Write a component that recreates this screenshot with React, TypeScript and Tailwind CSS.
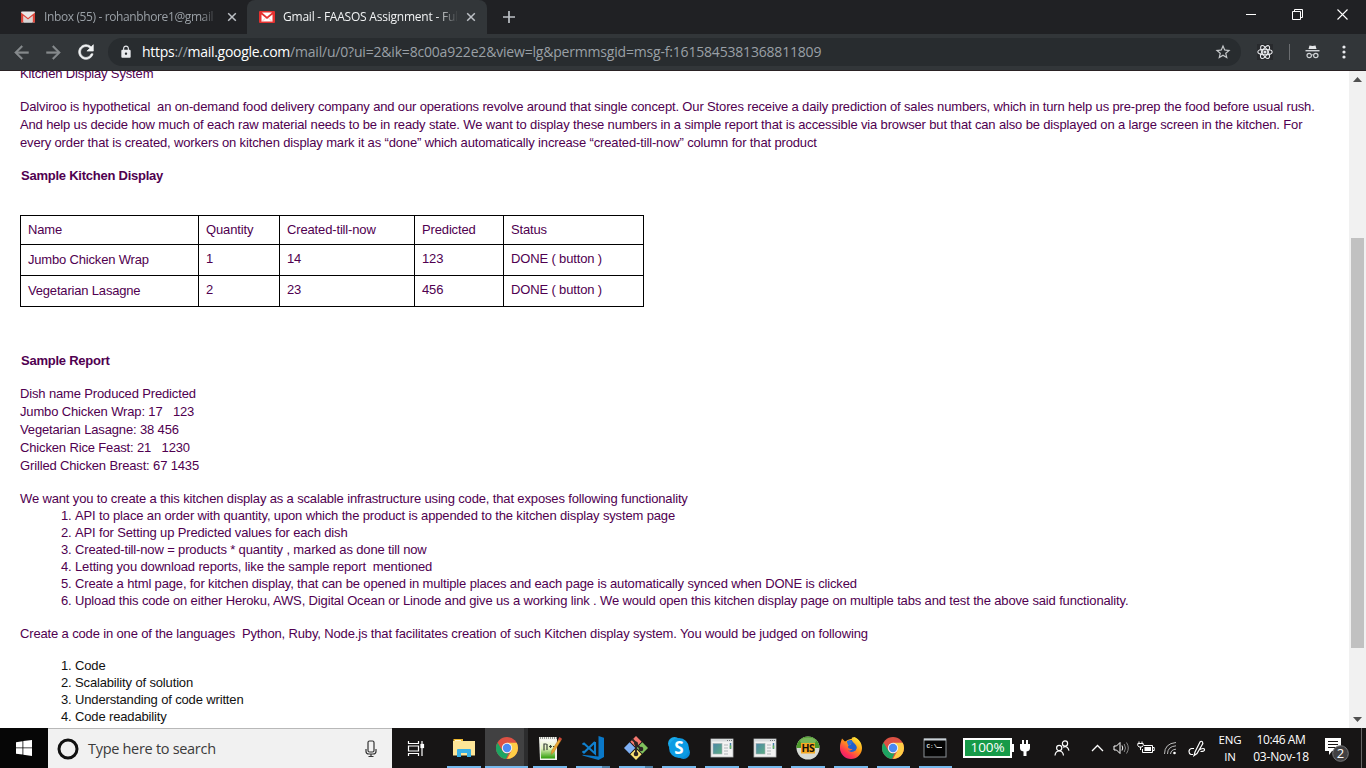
import React from "react";
import { MdArrowBack, MdArrowForward, MdRefresh, MdLock, MdStarBorder } from "react-icons/md";

const ui = "font-['Open_Sans','Noto_Sans',sans-serif] whitespace-pre";

function GmailIcon({ active }: { active?: boolean }) {
  return (
    <svg width="16" height="12" viewBox="0 0 16 12">
      {active ? (
        <>
          <rect width="16" height="12" rx="1" fill="#e5302f" />
          <path d="M2.500 10.500V3.500L8 8l5.500-4.500v7z" fill="#fff" />
          <path d="M3 1.500h10L8 5.800z" fill="#fff" />
          <path d="M3 10.500l3.500-3.500M13 10.500L9.500 7" stroke="#f3a9a6" strokeWidth=".7" />
        </>
      ) : (
        <>
          <rect x="1" y=".5" width="14" height="11" rx="1" fill="#e9e7e7" />
          <path d="M4 11.500V5l4 3.500L12 5v6.500z" fill="#d8d5d5" />
          <path d="M1 11.500V1.500L8 7l7-5.500v10h-2.300V4.800L8 8.500 3.300 4.800v6.700z" fill="#d9453a" />
        </>
      )}
    </svg>
  );
}

function CloseX() {
  return (
    <svg width="10" height="10" viewBox="0 0 10 10" stroke="#bdc1c6" strokeWidth="1.500">
      <path d="M1.200 1.200l7.600 7.600M8.800 1.200L1.200 8.800" />
    </svg>
  );
}

function ChromeIcon() {
  return (
    <svg width="24" height="24" viewBox="0 0 24 24">
      <circle cx="12" cy="12" r="11" fill="#dd5144" />
      <path d="M12 6.800h9.700A11 11 0 0 1 12 23l4.600-8.400z" fill="#ffcd46" />
      <path d="M2.500 6.400L7.400 14.800a5.200 5.200 0 0 0 6.500 2L11 23A11 11 0 0 1 2.500 6.400z" fill="#1da462" />
      <circle cx="12" cy="12" r="5.200" fill="#f3f3f3" />
      <circle cx="12" cy="12" r="4.200" fill="#4a8af4" />
    </svg>
  );
}

function ExplorerIcon() {
  return (
    <svg width="24" height="24" viewBox="0 0 24 24">
      <path d="M1.500 3h9.500v4H1.500z" fill="#f0b92f" />
      <path d="M1 5h22v14.500H1z" fill="#fde597" />
      <path d="M3 4h6v1H3z" fill="#fff6d0" />
      <path d="M5 21v-7a1 1 0 0 1 1-1h12a1 1 0 0 1 1 1v7h-4v-4H9v4z" fill="#38b0e6" />
    </svg>
  );
}

function NotepadIcon() {
  return (
    <svg width="24" height="24" viewBox="0 0 24 24">
      <defs>
        <linearGradient id="npp" x1="0" y1="0" x2="0" y2="1">
          <stop offset="0" stopColor="#fafaf6" />
          <stop offset=".45" stopColor="#e3f3bd" />
          <stop offset="1" stopColor="#2f9d08" />
        </linearGradient>
      </defs>
      <path d="M1 1h18v23H2z" fill="#f1f2ec" />
      <path d="M2.500 4H17v18.500H3z" fill="url(#npp)" />
      <path d="M2 2h17" stroke="#7b7f7b" strokeDasharray="1 1" strokeWidth="1.500" />
      <path d="M6 7.500v7M6 8h2.500M9 8v6M11 10.500h3M12.500 9v3M15 10.500h1.500" stroke="#39423a" strokeWidth="1.200" />
      <path d="M21.500 2l2 1.500L16 16l-3 2.500.8-4z" fill="#e8a733" stroke="#a36a18" strokeWidth=".4" />
      <path d="M21.500 1l2.300 1.500L22.500 5l-2.400-1.500z" fill="#cf453a" />
    </svg>
  );
}

function CodeIcon() {
  return (
    <svg width="26" height="26" viewBox="0 0 26 26">
      <path d="M18.500 1L24 2.800V22l-5.500 3L2.500 20.500v-.7l16 1.700z" fill="#0a78c8" />
      <path d="M15 7v11.500L4 8.500 2.500 9.500M15 7L4 17.500 2.500 16.200" fill="none" stroke="#1080ce" strokeWidth="2.100" />
    </svg>
  );
}

function GitIcon() {
  return (
    <svg width="26" height="26" viewBox="0 0 26 26">
      <g transform="rotate(45 13 13)">
        <rect x="4.500" y="4.500" width="8" height="8" fill="#f4786f" />
        <rect x="13.500" y="4.500" width="8" height="8" fill="#80c15d" />
        <rect x="4.500" y="13.500" width="8" height="8" fill="#7fb0f5" />
        <rect x="13.500" y="13.500" width="8" height="8" fill="#fae173" />
      </g>
      <path d="M9 4l4 4v12M13 9l5 5" stroke="#2c2424" strokeWidth="1.900" fill="none" />
      <circle cx="13" cy="8.500" r="2" fill="#2c2424" />
      <circle cx="18" cy="14" r="2.300" fill="#2c2424" />
      <circle cx="13" cy="19" r="2.300" fill="#2c2424" />
    </svg>
  );
}

function SkypeIcon() {
  return (
    <svg width="24" height="24" viewBox="0 0 24 24">
      <circle cx="7.500" cy="7.500" r="6.500" fill="#19abec" />
      <circle cx="16.500" cy="16.500" r="6.500" fill="#0a8edb" />
      <circle cx="12" cy="12" r="10" fill="#0c9be3" />
      <text x="12" y="18" textAnchor="middle" fontFamily="Open Sans" fontWeight="700" fontSize="17" fill="#fff">S</text>
    </svg>
  );
}

function WindowIcon() {
  return (
    <svg width="24" height="24" viewBox="0 0 24 24">
      <defs>
        <linearGradient id="scr" x1="0" y1="0" x2="1" y2="1">
          <stop offset="0" stopColor="#4d86a8" />
          <stop offset="1" stopColor="#5dae83" />
        </linearGradient>
      </defs>
      <rect x="1" y="3" width="22" height="18" fill="#f2f2f2" stroke="#b6b8ba" strokeWidth=".8" />
      <path d="M1 4.500h22" stroke="#d7dadc" strokeWidth="2" />
      <path d="M17 4.500h1M19 4.500h1M21 4.500h1" stroke="#74797d" />
      <rect x="3" y="7.500" width="9" height="10.500" fill="url(#scr)" stroke="#a5adb1" strokeWidth=".6" />
      <path d="M14 9h4M14 12h4M14 15h4M14 18h4" stroke="#c6c9cb" strokeWidth="1.400" />
      <path d="M20.500 7v6" stroke="#467ba9" strokeWidth="1.500" />
      <path d="M20.500 9.500v3" stroke="#66b855" strokeWidth="1.500" />
    </svg>
  );
}

function HsIcon() {
  return (
    <svg width="24" height="24" viewBox="0 0 24 24">
      <circle cx="12" cy="12" r="11.500" fill="#d7dad4" />
      <path d="M.5 12a11.500 11.500 0 0 1 23 0z" fill="#4c9a2b" />
      <ellipse cx="12" cy="5" rx="8" ry="3.500" fill="#78b65a" />
      <rect x="5" y="7" width="14" height="10.500" fill="#f6a821" />
      <text x="12" y="16" textAnchor="middle" fontFamily="Open Sans" fontWeight="700" fontSize="10.500" letterSpacing="-.4" fill="#17130b">HS</text>
    </svg>
  );
}

function FirefoxIcon() {
  return (
    <svg width="24" height="24" viewBox="0 0 24 24">
      <defs>
        <linearGradient id="ff" x1=".85" y1="0" x2=".15" y2="1">
          <stop offset="0" stopColor="#fff03d" />
          <stop offset=".4" stopColor="#ff9a16" />
          <stop offset=".75" stopColor="#ff3750" />
          <stop offset="1" stopColor="#e3127b" />
        </linearGradient>
      </defs>
      <path d="M2 5.500L3 2.500l3 3C9 4 9.500 3 13 3l2-2c5 2 8 6 8 11a11 11 0 0 1-22 0c0-3 .3-4.500 1-6.500z" fill="url(#ff)" />
      <circle cx="12.500" cy="10" r="6" fill="#2160cd" />
      <path d="M13 1.500c-1 2 0 4 2.500 6s3 5 1.500 7-5 3-8 0c2 .5 4-.5 4.500-1.500-3 0-4-.5-4.500-2 0-1.500 1-2 3-2.300C11 7 9.500 6 6.500 6L3 6c-2 4-2 8 0 11l9 5 8-4 2-7c0-4-2-7-6-9.500z" fill="url(#ff)" />
      <path d="M8 5c2-.8 4-.5 5.500 1l-1.500 2.500c-1.500 0-2 .5-1.500 1.500-1-.5-2.500-2-2.500-5z" fill="#2b73dc" />
    </svg>
  );
}

function CmdIcon() {
  return (
    <svg width="24" height="24" viewBox="0 0 24 24">
      <rect x="1" y="3" width="22" height="18" fill="#050505" stroke="#8b9196" />
      <path d="M1 3.500h22" stroke="#c9d0d6" strokeWidth="2" />
      <text x="3.500" y="12" fontFamily="Liberation Mono" fontWeight="700" fontSize="6" fill="#e0e0e0">C:\</text>
      <path d="M14 11.500h5" stroke="#e0e0e0" />
    </svg>
  );
}

const apps: { icon: React.ReactNode; slot: string; line: string }[] = [
  { icon: <ExplorerIcon />, slot: "w-[43px]", line: "w-[34px]" },
  { icon: <ChromeIcon />, slot: "w-[43px] bg-linear-to-r from-[#414142] from-90% to-[#2c2c2d] to-90%", line: "w-[43px]" },
  { icon: <NotepadIcon />, slot: "w-[43px]", line: "w-[34px]" },
  { icon: <CodeIcon />, slot: "w-[43px]", line: "w-[34px] border-r-8 border-[#4f80a6]" },
  { icon: <GitIcon />, slot: "w-[43px]", line: "w-[34px] border-r-8 border-[#4f80a6]" },
  { icon: <SkypeIcon />, slot: "w-[43px]", line: "w-[34px]" },
  { icon: <WindowIcon />, slot: "w-[43px]", line: "w-[34px]" },
  { icon: <WindowIcon />, slot: "w-[43px]", line: "w-[34px]" },
  { icon: <HsIcon />, slot: "w-[43px]", line: "w-[34px]" },
  { icon: <FirefoxIcon />, slot: "w-[43px]", line: "w-[34px]" },
  { icon: <ChromeIcon />, slot: "w-[42px]", line: "w-[33px]" },
  { icon: <CmdIcon />, slot: "w-[42px]", line: "w-[33px]" },
];

const rows = [
  ["Jumbo Chicken Wrap", "1", "14", "123", "DONE ( button )"],
  ["Vegetarian Lasagne", "2", "23", "456", "DONE ( button )"],
];

const report = [
  "Dish name Produced Predicted",
  "Jumbo Chicken Wrap: 17   123",
  "Vegetarian Lasagne: 38 456",
  "Chicken Rice Feast: 21   1230",
  "Grilled Chicken Breast: 67 1435",
];

const features = [
  "API to place an order with quantity, upon which the product is appended to the kitchen display system page",
  "API for Setting up Predicted values for each dish",
  "Created-till-now = products * quantity , marked as done till now",
  "Letting you download reports, like the sample report  mentioned",
  "Create a html page, for kitchen display, that can be opened in multiple places and each page is automatically synced when DONE is clicked",
  "Upload this code on either Heroku, AWS, Digital Ocean or Linode and give us a working link . We would open this kitchen display page on multiple tabs and test the above said functionality.",
];

const criteria = ["Code", "Scalability of solution", "Understanding of code written", "Code readability"];

function NumberedList({ items }: { items: string[] }) {
  return (
    <ol className="-mt-px mb-px pl-[41px] leading-[17px]">
      {items.map((t, i) => (
        <li key={t} className="flex">
          <span className="w-[14px]">{i + 1}.</span>
          <span>{t}</span>
        </li>
      ))}
    </ol>
  );
}

function Browser() {
  return (
    <header className="h-[71px] shrink-0 border-b border-[#2a2224] bg-[#323639]">
      <div className="flex h-[34px] bg-[#202124]">
        <div className={`${ui} flex w-[247px] items-center pl-[20px] text-[12px] text-[#9aa0a6]`}>
          <GmailIcon />
          <div className="ml-[8px] w-[174px] tracking-[-0.38px] [mask-image:linear-gradient(to_right,#000_90%,transparent)]">Inbox (55) - rohanbhore1@gmail</div>
          <div className="ml-[9px]"><CloseX /></div>
        </div>
        <div className={`${ui} flex w-[240px] items-center rounded-t-[8px] bg-[#323639] pl-[12px] text-[12px] text-[#f1f3f4]`}>
          <GmailIcon active />
          <div className="ml-[8px] w-[175px] tracking-[-0.22px] [mask-image:linear-gradient(to_right,#000_88%,transparent)]">Gmail - FAASOS Assignment - Ful</div>
          <div className="ml-[8px]"><CloseX /></div>
        </div>
        <svg className="mt-[11px] ml-[16px]" width="12" height="12" viewBox="0 0 12 12" stroke="#bdc1c6" strokeWidth="1.700"><path d="M6 0v12M0 6h12" /></svg>
        <div className="ml-auto flex w-[120px] justify-between pt-[9px] pr-[18px] pl-0">
          <svg width="11" height="11" viewBox="0 0 11 11" stroke="#fff"><path d="M0 5.500h10" /></svg>
          <svg width="11" height="11" viewBox="0 0 11 11" stroke="#fff" fill="none"><path d="M.5 2.500h8v8h-8zM2.500 2.500v-2h8v8h-2" /></svg>
          <svg width="11" height="11" viewBox="0 0 11 11" stroke="#fff" strokeWidth="1.100"><path d="M.5.5l10 10M10.500.5l-10 10" /></svg>
        </div>
      </div>
      <div className="flex h-[36px] items-center">
        <MdArrowBack className="ml-[11px] [&>path:last-child]:stroke-[0.5px]" size={21} color="#868a8d" strokeWidth={0} />
        <MdArrowForward className="ml-[11px] [&>path:last-child]:stroke-[0.5px]" size={21} color="#868a8d" strokeWidth={0} />
        <MdRefresh className="ml-[11px] [&>path:last-child]:stroke-[0.7px]" size={22} color="#f1f3f4" strokeWidth={0} />
        <div className={`${ui} ml-[11px] flex h-[28px] w-[1133px] items-center rounded-full bg-[#282c2f] pl-[11px] text-[14px]`}>
          <MdLock size={14} color="#e8eaed" />
          <div className="-mt-px ml-[9px] tracking-[-0.19px] text-[#9aa0a6]">
            <span className="tracking-[-0.28px]"><span className="text-white">https</span>://<span className="text-white">mail.google.com</span></span>/mail/u/0?ui=2&amp;ik=8c00a922e2&amp;view=lg&amp;permmsgid=msg-f:1615845381368811809
          </div>
          <MdStarBorder className="mr-[9px] ml-auto" size={18} color="#c5c8ca" />
        </div>
        <svg className="ml-[16px]" width="16" height="16" viewBox="0 0 16 16" fill="none" stroke="#e8eaed" strokeWidth="1.100">
          <rect width="16" height="16" fill="#282a2d" stroke="none" />
          <ellipse cx="8" cy="8" rx="7.200" ry="2.800" />
          <ellipse cx="8" cy="8" rx="7.200" ry="2.800" transform="rotate(60 8 8)" />
          <ellipse cx="8" cy="8" rx="7.200" ry="2.800" transform="rotate(120 8 8)" />
          <circle cx="8" cy="8" r="1" fill="#e8eaed" />
        </svg>
        <div className="ml-[16px] h-[16px] w-px bg-[#6a6d70]" />
        <svg className="ml-[15px]" width="15" height="16" viewBox="0 0 15 16" fill="none" stroke="#d0d3d6">
          <path d="M3.500 5L4.500 1.500l3 .6 3-.6L11.500 5z" fill="#e3e5e7" stroke="none" />
          <path d="M.5 6.700h14" strokeWidth="1.400" />
          <circle cx="4.200" cy="11.500" r="2.200" strokeWidth="1.200" />
          <circle cx="10.800" cy="11.500" r="2.200" strokeWidth="1.200" />
          <path d="M6.300 11.200q1.200-.8 2.400 0" />
        </svg>
        <svg className="ml-[22px]" width="4" height="14" viewBox="0 0 4 14" fill="#e8eaed"><circle cx="2" cy="2" r="1.600" /><circle cx="2" cy="7" r="1.600" /><circle cx="2" cy="12" r="1.600" /></svg>
      </div>
    </header>
  );
}

function Message() {
  return (
    <main className="flex min-h-0 flex-1 overflow-hidden bg-white font-['Liberation_Sans',Arial,sans-serif] text-[13px] leading-[18px] tracking-[-0.146px] whitespace-pre text-[#500050]">
      <div className="flex min-w-0 flex-1 flex-col overflow-hidden pl-[20px]">
        <div className="-mt-[6px]">Kitchen Display System</div>
        <div className="mt-[15px]">
          <div>Dalviroo is hypothetical  an on-demand food delivery company and our operations revolve around that single concept. Our Stores receive a daily prediction of sales numbers, which in turn help us pre-prep the food before usual rush.</div>
          <div>And help us decide how much of each raw material needs to be in ready state. We want to display these numbers in a simple report that is accessible via browser but that can also be displayed on a large screen in the kitchen. For</div>
          <div>every order that is created, workers on kitchen display mark it as “done” which automatically increase “created-till-now” column for that product</div>
        </div>
        <h2 className="mt-[15px] pl-px font-bold tracking-[-0.24px]">Sample Kitchen Display</h2>
        <table className="mt-[30px] w-[624px] table-fixed border-collapse [&_td]:border [&_td]:border-black [&_td]:px-[7px] [&_td]:py-0">
          <colgroup>
            <col className="w-[178px]" /><col className="w-[81px]" /><col className="w-[135px]" /><col className="w-[89px]" /><col className="w-[140px]" />
          </colgroup>
          <tbody>
            <tr className="h-[29px]">
              {["Name", "Quantity", "Created-till-now", "Predicted", "Status"].map((h) => <td key={h}>{h}</td>)}
            </tr>
            {rows.map((r) => (
              <tr key={r[0]} className="h-[31px]">
                {r.map((c, i) => <td key={i} className={i === 0 ? "tracking-[-0.18px]" : "pb-[2px]!"}>{c}</td>)}
              </tr>
            ))}
          </tbody>
        </table>
        <h2 className="mt-[45px] pl-px font-bold tracking-[-0.24px]">Sample Report</h2>
        <div className="mt-[15px]">{report.map((t) => <div key={t}>{t}</div>)}</div>
        <div className="mt-[15px]">We want you to create a this kitchen display as a scalable infrastructure using code, that exposes following functionality</div>
        <NumberedList items={features} />
        <div className="mt-[15px]">Create a code in one of the languages  Python, Ruby, Node.js that facilitates creation of such Kitchen display system. You would be judged on following</div>
        <div className="mt-[15px] text-[#111]"><NumberedList items={criteria} /></div>
      </div>
      <div className="flex w-[17px] shrink-0 flex-col items-center bg-[#f1f1f1]">
        <svg className="mt-[6px]" width="9" height="5" viewBox="0 0 9 5"><path d="M4.500 0L9 5H0z" fill="#505050" /></svg>
        <div className="mt-[156px] h-[410px] w-[13px] bg-[#c1c1c1]" />
        <svg className="mt-auto mb-[6px]" width="9" height="5" viewBox="0 0 9 5"><path d="M4.500 5L9 0H0z" fill="#505050" /></svg>
      </div>
    </main>
  );
}

function Taskbar() {
  return (
    <footer className={`${ui} flex h-[40px] shrink-0 bg-[#171515] text-white`}>
      <div className="flex w-[48px] items-center justify-center bg-[#060606]">
        <svg width="16" height="16" viewBox="0 0 16 16" fill="#fff"><path d="M0 2.200L6.500 1.200v6.300H0zM7.300 1.100L16 0v7.500H7.300zM0 8.300h6.500v6.300L0 13.700zM7.300 8.300H16V16l-8.700-1.200z" /></svg>
      </div>
      <div className="flex w-[344px] items-center border-t border-[#b8b8b8] bg-[#f1f1f1] pl-[9px]">
        <svg width="22" height="22" viewBox="0 0 22 22"><circle cx="11" cy="11" r="9" fill="none" stroke="#111" strokeWidth="3" /></svg>
        <div className="ml-[9px] text-[14.500px] tracking-[-0.3px] text-[#3b3b3b]">Type here to search</div>
        <svg className="mr-[15px] ml-auto" width="12" height="18" viewBox="0 0 12 18" fill="none" stroke="#333" strokeWidth="1.200"><rect x="3" y="1" width="6" height="11" rx="1.500" /><path d="M1 9v2.500q0 2.500 3 2.500h4q3 0 3-2.500V9M6 14v2.500M3.500 16.500h5" /></svg>
      </div>
      <div className="flex w-[50px] items-center justify-center pr-[2px]">
        <svg width="18" height="17" viewBox="0 0 18 17" fill="none" stroke="#fff" strokeWidth="1.200"><path d="M1.500 1v2.500h10V1M1.500 16v-2.500h10V16M1.500 6h10v5h-10zM15 1v15" /><rect x="14" y="4.500" width="2.500" height="3" fill="#fff" /></svg>
      </div>
      <div className="flex">
        {apps.map((a, i) => (
          <div key={i} className={`flex flex-col items-center ${a.slot}`}>
            <div className="-mb-[2px] flex h-[40px] items-center">{a.icon}</div>
            <div className={`h-[2px] bg-[#76b9ed] ${a.line}`} />
          </div>
        ))}
      </div>
      <div className="ml-[7px] flex items-center">
        <div className="flex h-[20px] w-[49px] items-center justify-center border-2 border-white bg-[#169a48] pb-px text-[13.500px] leading-none tracking-[-0.1px]">100%</div>
        <div className="h-[8px] w-[2px] bg-white" />
        <svg className="ml-[6px]" width="10" height="16" viewBox="0 0 10 16" fill="#fff"><path d="M2 0h2v4h2V0h2v4h2v4q0 3-3.500 3.500V16h-3v-4.500Q0 11 0 8V4h2z" /></svg>
      </div>
      <div className="ml-auto flex items-center">
        <svg width="16" height="17" viewBox="0 0 16 17" fill="none" stroke="#fff" strokeWidth="1.200"><circle cx="5.200" cy="8" r="2.600" /><path d="M1 15.500q.5-4.500 4.200-4.500t4.300 4.500" /><circle cx="11" cy="3.500" r="2.600" /><path d="M9 7.200q4.500-2 6 3.500" /></svg>
        <svg className="ml-[21px]" width="13" height="8" viewBox="0 0 13 8" fill="none" stroke="#fff" strokeWidth="1.300"><path d="M1 7l5.500-5.500L12 7" /></svg>
        <svg className="ml-[9px]" width="17" height="14" viewBox="0 0 17 14" fill="none" stroke="#fff"><path d="M1 5h2.500L7 1.500v11L3.500 9H1z" /><path d="M9 4.500q1.500 2.500 0 5" /><path d="M11.200 3q2.600 4 0 8M13.500 1.500q3.600 5.500 0 11" stroke="#888" /></svg>
        <svg className="ml-[7px]" width="18" height="14" viewBox="0 0 18 14" fill="none" stroke="#fff"><path d="M2 .5v2M5 .5v2M.8 2.500h5.400v2l-1.200 1.500H2L.8 4.500zM3.500 6v3" /><path d="M7 4.500h8.500v7h-10V8M16 6.500h1.200v3H16" /><path d="M7.500 6h6.500v4H7.500z" fill="#fff" stroke="none" /></svg>
        <svg className="ml-[8px]" width="14" height="14" viewBox="0 0 14 14" fill="none" stroke="#bbb"><path d="M1.500 13Q1.500 2.500 13 1.500M4.500 13Q4.500 5.500 13 4.800M7.500 13Q8 8.500 13 8.200" /><circle cx="11.500" cy="12" r="1.300" fill="#fff" stroke="none" /></svg>
        <svg className="ml-[11px]" width="18" height="17" viewBox="0 0 18 17" fill="none" stroke="#fff" strokeWidth="1.200"><path d="M7 12L12 2q1.500-1.500 2.500 0t-.5 3L9 13.500l-3 2zM6 8.500H3.500Q1 9 1 11.500t2 3h2M12 9.500q4-2 4.500 0t-4 2" /></svg>
        <div className="ml-[12px] flex w-[24px] flex-col items-center text-[11.500px] leading-[17px] tracking-[-0.1px]"><span>ENG</span><span>IN</span></div>
        <div className="ml-[9px] flex w-[60px] flex-col items-center text-[12px] leading-[17px] tracking-[-0.2px]"><span className="tracking-[-0.4px]">10:46 AM</span><span>03-Nov-18</span></div>
        <svg className="mt-[2px] ml-[13px]" width="26" height="26" viewBox="0 0 26 26"><path d="M1 2h16v13H8l-3 4v-4H1z" fill="#fff" /><path d="M4 5.500h10M4 8.500h10M4 11.500h10" stroke="#171515" /><circle cx="16.500" cy="17.500" r="7.800" fill="#414042" stroke="#77787a" /><text x="16.500" y="22" textAnchor="middle" fontFamily="Open Sans" fontSize="13" fill="#fff">2</text></svg>
        <div className="ml-[11px] h-[40px] w-px bg-[#666]" />
        <div className="w-[4px]" />
      </div>
    </footer>
  );
}

export default function App() {
  return (
    <div className="flex h-[768px] w-[1366px] flex-col overflow-hidden">
      <Browser />
      <Message />
      <Taskbar />
    </div>
  );
}
